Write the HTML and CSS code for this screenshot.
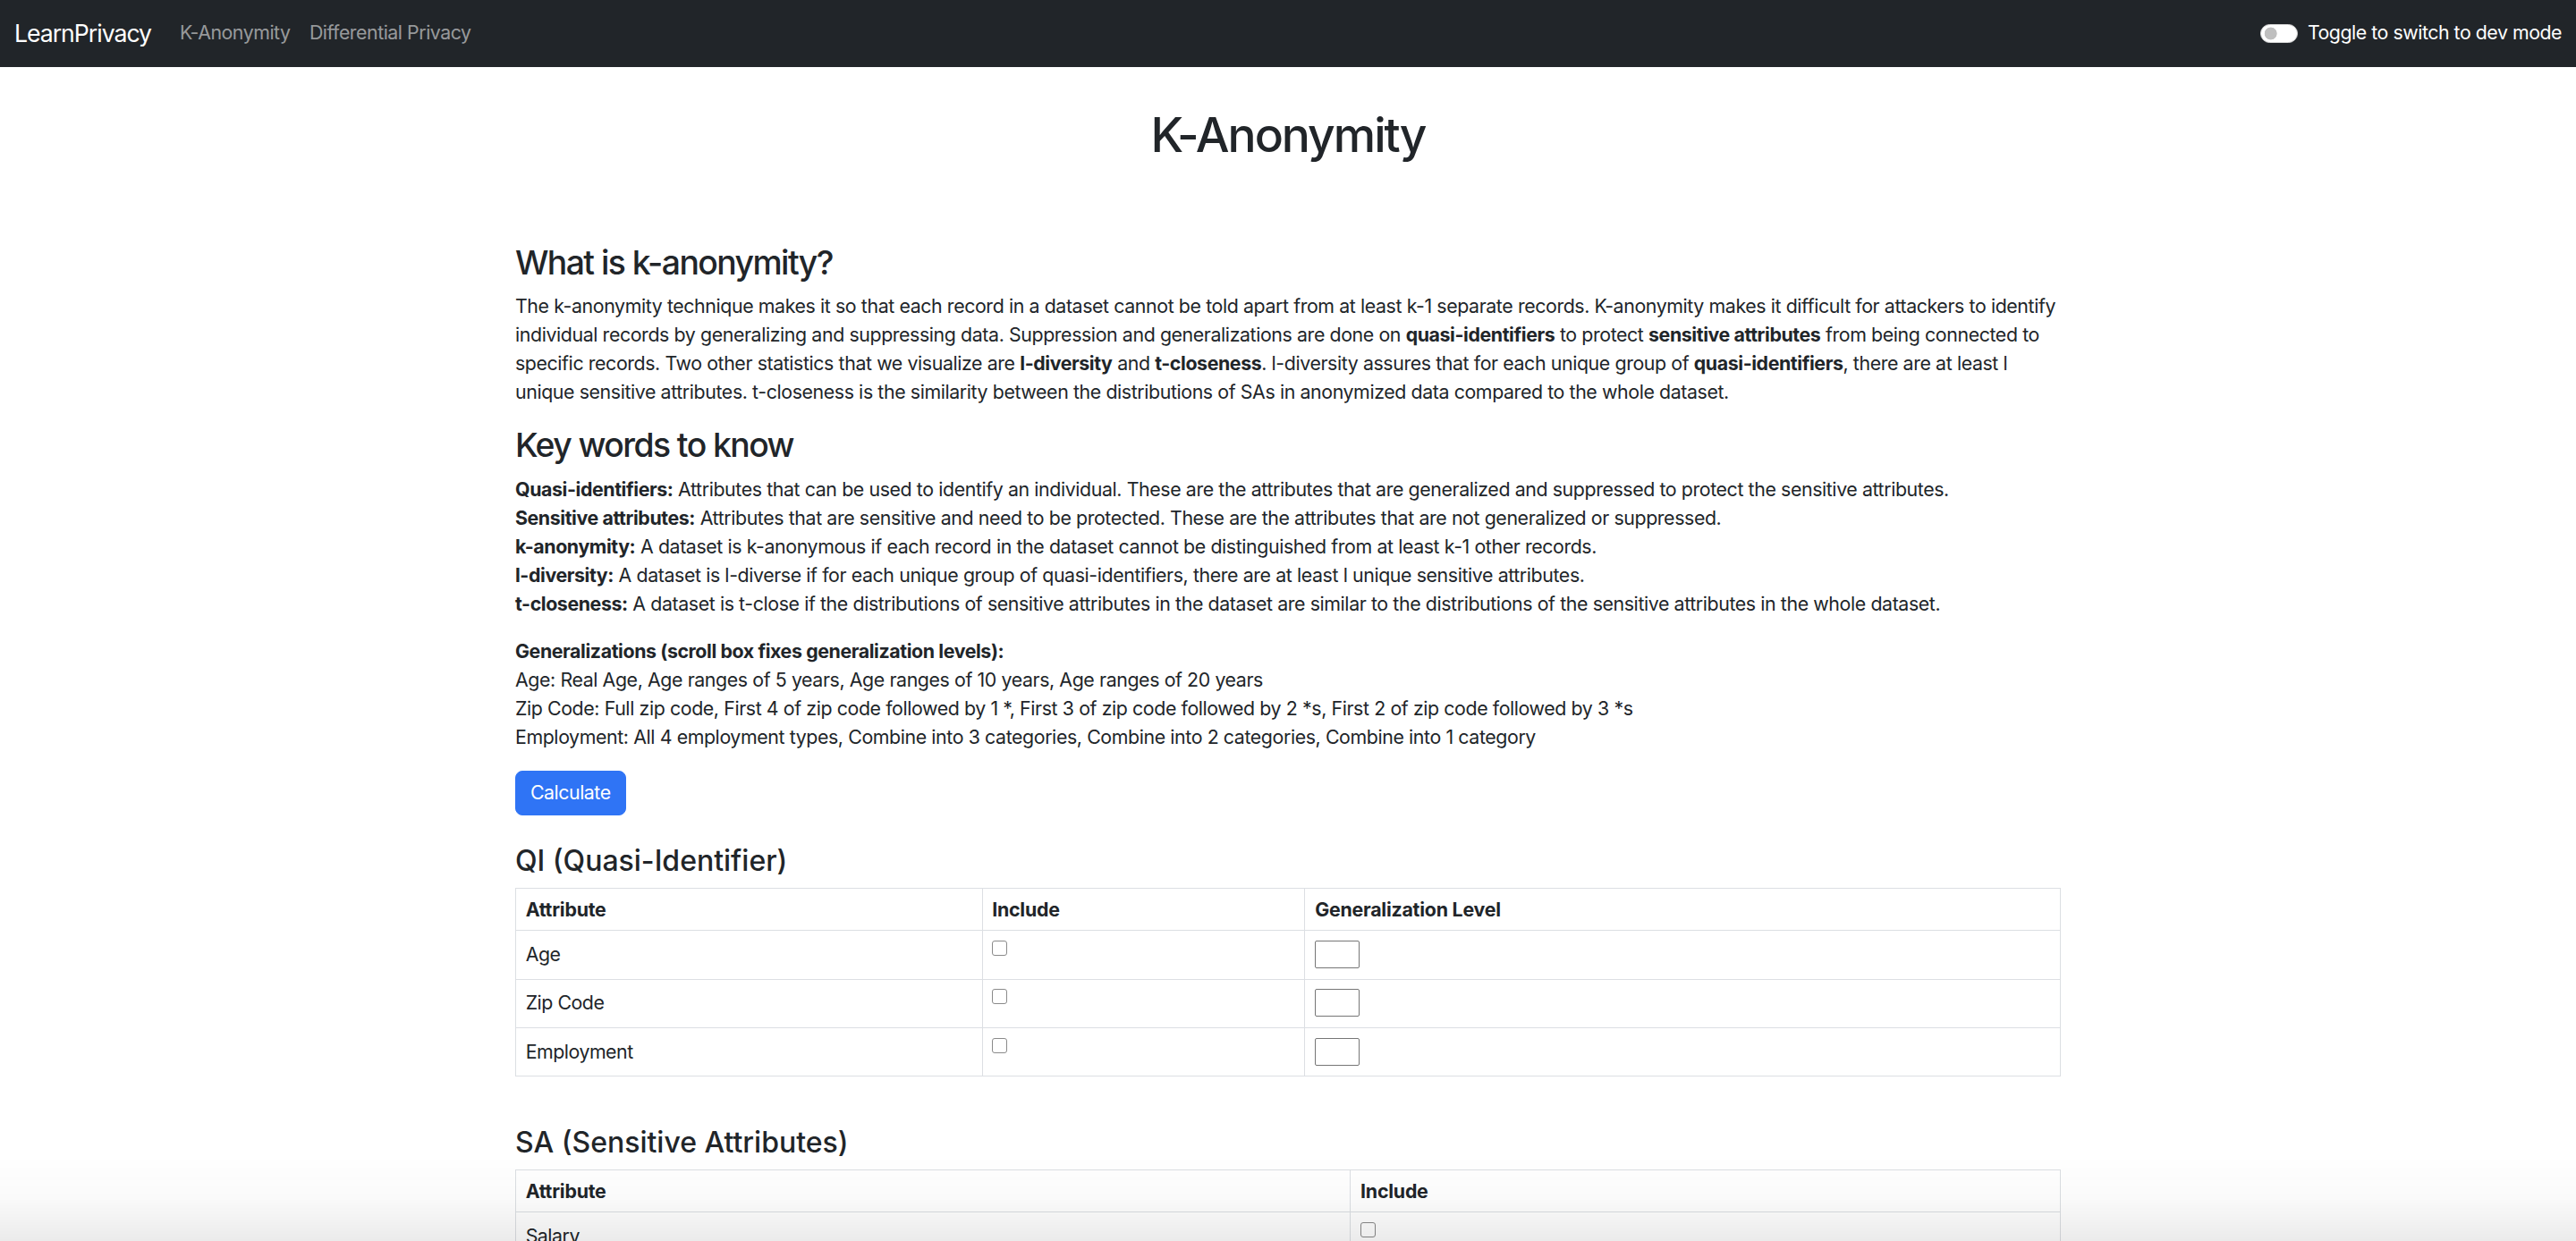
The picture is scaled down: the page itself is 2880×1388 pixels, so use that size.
FILE: index.html
```html
<!DOCTYPE html>
<html lang="en">
<head>
<meta charset="utf-8">
<title>LearnPrivacy – K-Anonymity</title>
<link rel="stylesheet" href="styles.css">
</head>
<body>
<nav class="navbar">
  <div class="navbar-inner">
    <div class="nav-left">
      <a class="brand" href="#">LearnPrivacy</a>
      <a class="nav-link" href="#">K-Anonymity</a>
      <a class="nav-link" href="#">Differential Privacy</a>
    </div>
    <label class="dev-switch">
      <input class="switch-input" type="checkbox">
      <span>Toggle to switch to dev mode</span>
    </label>
  </div>
</nav>

<main class="container">
  <h1 class="page-title">K-Anonymity</h1>

  <h3 class="section-title">What is k-anonymity?</h3>
  <p>The k-anonymity technique makes it so that each record in a dataset cannot be told apart from at least k-1 separate records. K-anonymity makes it difficult for attackers to identify individual records by generalizing and suppressing data. Suppression and generalizations are done on <b>quasi-identifiers</b> to protect <b>sensitive attributes</b> from being connected to specific records. Two other statistics that we visualize are <b>l-diversity</b> and <b>t-closeness</b>. l-diversity assures that for each unique group of <b>quasi-identifiers</b>, there are at least l unique sensitive attributes. t-closeness is the similarity between the distributions of SAs in anonymized data compared to the whole dataset.</p>

  <h3 class="section-title">Key words to know</h3>
  <div class="key-list">
    <p><b>Quasi-identifiers:</b> Attributes that can be used to identify an individual. These are the attributes that are generalized and suppressed to protect the sensitive attributes.</p>
    <p><b>Sensitive attributes:</b> Attributes that are sensitive and need to be protected. These are the attributes that are not generalized or suppressed.</p>
    <p><b>k-anonymity:</b> A dataset is k-anonymous if each record in the dataset cannot be distinguished from at least k-1 other records.</p>
    <p><b>l-diversity:</b> A dataset is l-diverse if for each unique group of quasi-identifiers, there are at least l unique sensitive attributes.</p>
    <p><b>t-closeness:</b> A dataset is t-close if the distributions of sensitive attributes in the dataset are similar to the distributions of the sensitive attributes in the whole dataset.</p>
  </div>

  <div class="gen-list">
    <p><b>Generalizations (scroll box fixes generalization levels):</b></p>
    <p>Age: Real Age, Age ranges of 5 years, Age ranges of 10 years, Age ranges of 20 years</p>
    <p>Zip Code: Full zip code, First 4 of zip code followed by 1 *, First 3 of zip code followed by 2 *s, First 2 of zip code followed by 3 *s</p>
    <p>Employment: All 4 employment types, Combine into 3 categories, Combine into 2 categories, Combine into 1 category</p>
  </div>

  <button class="btn-primary" type="button">Calculate</button>

  <h4 class="table-title">QI (Quasi-Identifier)</h4>
  <table class="data-table">
    <colgroup>
      <col class="qi-attr">
      <col class="qi-include">
      <col>
    </colgroup>
    <thead>
      <tr><th>Attribute</th><th>Include</th><th>Generalization Level</th></tr>
    </thead>
    <tbody>
      <tr><td>Age</td><td><input class="include-box" type="checkbox"></td><td><input class="level-input" type="text"></td></tr>
      <tr><td>Zip Code</td><td><input class="include-box" type="checkbox"></td><td><input class="level-input" type="text"></td></tr>
      <tr><td>Employment</td><td><input class="include-box" type="checkbox"></td><td><input class="level-input" type="text"></td></tr>
    </tbody>
  </table>

  <h4 class="table-title sa-title">SA (Sensitive Attributes)</h4>
  <table class="data-table">
    <colgroup>
      <col class="sa-attr">
      <col>
    </colgroup>
    <thead>
      <tr><th>Attribute</th><th>Include</th></tr>
    </thead>
    <tbody>
      <tr><td>Salary</td><td><input class="include-box" type="checkbox"></td></tr>
    </tbody>
  </table>
</main>

<div class="bottom-fade"></div>
</body>
</html>
```

FILE: styles.css
```css
html {
  font-size: 21.3333px;
}

body {
  margin: 0;
  font-family: Inter, "Liberation Sans", sans-serif;
  font-size: 1rem;
  line-height: 1.5;
  letter-spacing: -0.0185em;
  color: #212529;
  background: #fff;
}

/* ---------- navbar ---------- */
.navbar {
  background: #212529;
  padding: 0.5rem 0;
}

.navbar-inner {
  display: flex;
  align-items: center;
  justify-content: space-between;
  padding: 0 0.75rem;
}

.nav-left {
  display: flex;
  align-items: center;
}

.brand {
  font-size: 1.25rem;
  line-height: 1.5;
  letter-spacing: -0.039em;
  padding: 0.3125rem 0;
  margin-right: 1rem;
  color: #fff;
  text-decoration: none;
}

.nav-link {
  padding: 0.5rem;
  letter-spacing: -0.022em;
  color: rgba(255, 255, 255, 0.55);
  text-decoration: none;
}

.dev-switch {
  display: flex;
  align-items: center;
  gap: 0.5rem;
  letter-spacing: -0.022em;
  color: #fff;
}

.switch-input {
  appearance: none;
  -webkit-appearance: none;
  box-sizing: border-box;
  width: 2rem;
  height: 1rem;
  margin: 0;
  border: 1px solid #d6d6d6;
  border-radius: 2rem;
  background: #fff radial-gradient(circle at 0.5rem 50%, #bfbfbf 0.31rem, rgba(191, 191, 191, 0) 0.34rem);
}

/* ---------- content ---------- */
.container {
  max-width: 82.5rem;
  margin: 0 auto;
  padding: 0 0.75rem;
  box-sizing: border-box;
}

.page-title {
  text-align: center;
  font-size: 2.5rem;
  font-weight: 500;
  line-height: 1.2;
  letter-spacing: -0.0375em;
  margin: 44px 0 89px;
}

.section-title {
  font-size: 1.75rem;
  font-weight: 500;
  line-height: 1.2;
  letter-spacing: -0.042em;
  margin: 0 0 0.5rem;
}

p {
  margin: 0 0 1rem;
}

.key-list,
.gen-list {
  margin-bottom: 1rem;
}

.key-list p,
.gen-list p {
  margin: 0;
}

.btn-primary {
  display: inline-block;
  font-family: inherit;
  font-size: 1rem;
  line-height: 1.5;
  letter-spacing: -0.022em;
  padding: 0.375rem 0.75rem;
  border: 1px solid #2f74f5;
  border-radius: 0.375rem;
  background: #2f74f5;
  color: #fff;
}

.table-title {
  font-size: 1.5rem;
  font-weight: 500;
  line-height: 1.2;
  letter-spacing: 0;
  margin: 32px 0 0.5rem;
}

.sa-title {
  margin-top: 55px;
}

.data-table {
  width: 100%;
  border-collapse: collapse;
  margin-bottom: 1rem;
}

.data-table th,
.data-table td {
  border: 1px solid #dcdfe3;
  padding: 0.5rem;
  text-align: left;
  vertical-align: top;
}

.data-table th {
  font-weight: 700;
  line-height: 24.7px;
  letter-spacing: -0.01em;
}

.data-table td {
  letter-spacing: -0.022em;
}

.qi-attr {
  width: 30.2%;
}

.qi-include {
  width: 20.9%;
}

.sa-attr {
  width: 54.05%;
}

.include-box {
  appearance: none;
  -webkit-appearance: none;
  display: block;
  width: 17px;
  height: 17px;
  margin: 0;
  border: 1px solid #8a8a8a;
  border-radius: 3px;
  background: #fff;
}

.level-input {
  display: block;
  box-sizing: border-box;
  width: 50px;
  height: 31px;
  margin: 0;
  padding: 1px 2px;
  border: 1px solid #767676;
  border-radius: 2px;
  font: inherit;
  background: #fff;
}

.bottom-fade {
  position: fixed;
  left: 0;
  right: 0;
  bottom: 0;
  height: 96px;
  background: linear-gradient(rgba(0, 0, 0, 0), rgba(0, 0, 0, 0.02) 50%, rgba(0, 0, 0, 0.08));
  pointer-events: none;
}
```
